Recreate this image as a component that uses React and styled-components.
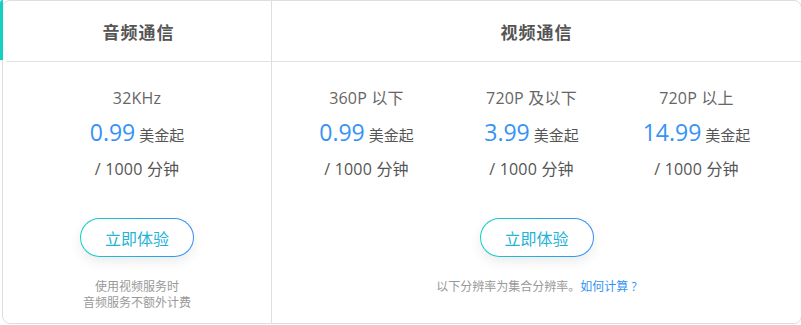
import React from "react";
import styled, { createGlobalStyle } from "styled-components";

const Global = createGlobalStyle`
  html, body {
    margin: 0;
    padding: 0;
    background: #fff;
    overflow: hidden;
  }
  body {
    font-family: "Open Sans", "Noto Sans CJK SC", sans-serif;
  }
`;

const Page = styled.div`
  padding-left: 2px;
  width: 800px;
`;

const Table = styled.div`
  position: relative;
  display: grid;
  grid-template-columns: 269px 1fr;
  height: 322px;
  border: 1px solid #dedede;
  border-radius: 8px;

  &::before {
    content: "";
    position: absolute;
    left: -3px;
    top: -1px;
    width: 3px;
    height: 60px;
    background: #14cfc2;
    border-top-left-radius: 6px;
  }
`;

const Column = styled.div`
  display: flex;
  flex-direction: column;
  border-right: ${(p) => (p.$divider ? "1px solid #dedede" : "none")};
`;

const Head = styled.div`
  height: 60px;
  margin-left: ${(p) => p.$inset || 0}px;
  border-bottom: 1px solid #e2e2e2;
  display: flex;
  align-items: center;
  justify-content: center;
  font-size: 17px;
  font-weight: 700;
  color: #555;
  letter-spacing: 1px;
`;

const Body = styled.div`
  flex: 1;
  display: flex;
  flex-direction: column;
  align-items: center;
  padding-top: 24px;
`;

const Plans = styled.div`
  display: grid;
  grid-template-columns: repeat(3, 165px);
  align-self: flex-start;
  padding-left: 12px;
`;

const Plan = styled.div`
  display: flex;
  flex-direction: column;
  align-items: center;
`;

const Label = styled.div`
  font-size: 16px;
  line-height: 24px;
  color: #666;
  letter-spacing: 0.2px;
`;

const Price = styled.div`
  margin-top: 4px;
  line-height: 36px;
  display: flex;
  align-items: baseline;
  gap: 4px;
`;

const Amount = styled.span`
  font-size: 23px;
  color: #3493f4;
`;

const Unit = styled.span`
  font-size: 15px;
  color: #555;
`;

const Per = styled.div`
  margin-top: 4px;
  font-size: 16px;
  line-height: 24px;
  color: #555;
  letter-spacing: 0.2px;
`;

const TryButton = styled.button`
  margin-top: 37px;
  width: 114px;
  height: 39px;
  border-radius: 20px;
  border: 1px solid transparent;
  background: linear-gradient(#fff, #fff) padding-box,
    linear-gradient(90deg, #13d0c3, #3a8cf6) border-box;
  box-shadow: 0 5px 12px rgba(0, 0, 0, 0.08);
  font-family: "Open Sans", "Noto Sans CJK SC", sans-serif;
  font-size: 16px;
  color: #25b2d6;
  cursor: pointer;
`;

const Note = styled.div`
  margin-top: 22px;
  font-size: 12px;
  line-height: 16px;
  color: #999;
  text-align: center;
`;

const Link = styled.a`
  color: #3493f4;
  text-decoration: none;
`;

const videoPlans = [
  { label: "360P 以下", price: "0.99" },
  { label: "720P 及以下", price: "3.99" },
  { label: "720P 以上", price: "14.99" },
];

export default function App() {
  return (
    <Page>
      <Global />
      <Table>
        <Column $divider>
          <Head $inset={3}>音频通信</Head>
          <Body>
            <Plan>
              <Label>32KHz</Label>
              <Price>
                <Amount>0.99</Amount>
                <Unit>美金起</Unit>
              </Price>
              <Per>/ 1000 分钟</Per>
            </Plan>
            <TryButton>立即体验</TryButton>
            <Note>
              使用视频服务时
              <br />
              音频服务不额外计费
            </Note>
          </Body>
        </Column>
        <Column>
          <Head>视频通信</Head>
          <Body>
            <Plans>
              {videoPlans.map((p) => (
                <Plan key={p.label}>
                  <Label>{p.label}</Label>
                  <Price>
                    <Amount>{p.price}</Amount>
                    <Unit>美金起</Unit>
                  </Price>
                  <Per>/ 1000 分钟</Per>
                </Plan>
              ))}
            </Plans>
            <TryButton>立即体验</TryButton>
            <Note>
              以下分辨率为集合分辨率。<Link href="#">如何计算 ?</Link>
            </Note>
          </Body>
        </Column>
      </Table>
    </Page>
  );
}
